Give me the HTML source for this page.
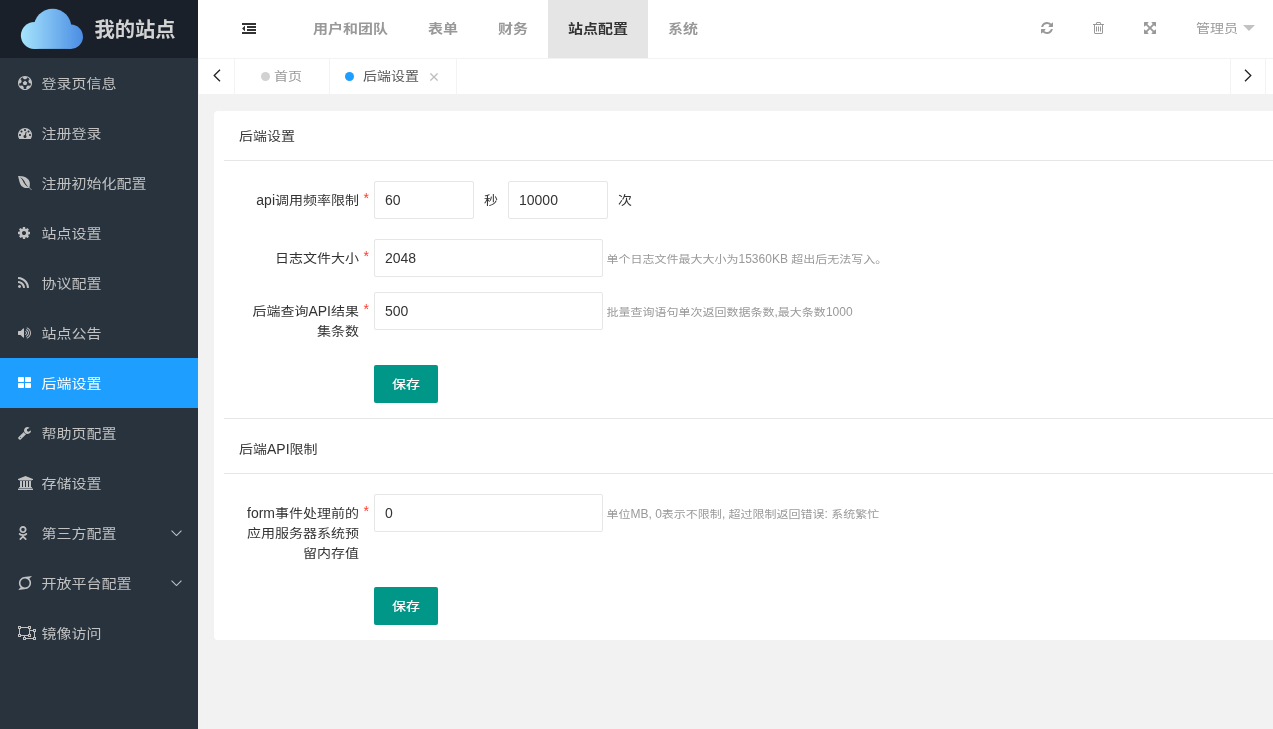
<!DOCTYPE html>
<html lang="zh-CN">
<head>
<meta charset="utf-8">
<title>后端设置</title>
<style>
*{box-sizing:border-box;margin:0;padding:0}
html,body{width:1273px;height:729px;overflow:hidden}
body{position:relative;background:#f2f2f2;font-family:"Liberation Sans","Noto Sans CJK SC",sans-serif;font-size:14px;color:#333;line-height:24px}
ul{list-style:none}
.c{display:inline-block;transform:translateY(.3px) scaleY(.87);transform-origin:50% 50%}
#logo .c{transform:none}
#menu .c{transform:translateY(.25px) scaleY(.87)}
.aux .c{transform:translateY(.4px) scaleY(.87)}
.mid .c{transform:translateY(.6px) scaleY(.87)}
.hd .c{transform:translateY(.2px) scaleY(.87)}
#tabs .c{transform:translateY(-.5px) scaleY(.87)}
#head .nav .c{transform:translateY(-.5px) scaleY(.86)}
#app{position:absolute;left:0;top:0;width:1273px;height:729px;overflow:hidden;will-change:transform}
svg.fa{display:block;position:absolute}
/* sidebar */
#side{position:absolute;left:0;top:0;width:198px;height:729px;background:#28333e;overflow:hidden}
#logo{position:absolute;left:0;top:0;width:198px;height:58px;background:#1a2029}
#logo svg{position:absolute;left:0;top:0;width:198px;height:58px}
#logo b{position:absolute;left:94.5px;top:0.5px;line-height:58px;font-size:20.3px;font-weight:bold;color:#d2d2d2;white-space:nowrap}
#menu li{position:absolute;left:0;width:198px;height:50px;line-height:50px;color:#c2c2c2;font-size:15px;white-space:nowrap}
#menu li.on{background:#1e9fff;color:#fff}
#menu li svg.fa{left:17.5px;top:18px}
#menu li>span{position:absolute;left:41.5px;top:0}
#menu li svg.chev{position:absolute;left:170.5px;top:21.5px;width:11px;height:6.5px}
/* header */
#head{position:absolute;left:198px;top:0;width:1200px;height:59px;background:#fff;border-bottom:1px solid #f3f3f3}
#head .nav{position:absolute;left:95px;top:0;height:58px;white-space:nowrap;font-size:0}
#head .nav li{display:inline-block;height:58px;line-height:58px;padding:0 20px;font-size:15px;color:#999;font-weight:bold}
#head .nav li.on{background:#e5e5e5;color:#333;font-weight:bold}
#head .r{position:absolute;top:-1px;line-height:58px;font-size:14px;color:#999;white-space:nowrap}
#caret{position:absolute;left:1045px;top:25px;width:0;height:0;border:6px solid transparent;border-top-color:#c2c2c2;border-bottom-width:0}
/* tabs */
#tabs{position:absolute;left:198px;top:59px;width:1200px;height:35px;background:#fff}
#tabs .ctl{position:absolute;top:0;height:35px;width:37px;border-left:1px solid #f3f3f3;border-right:1px solid #f3f3f3}
#tabs .ctl svg{position:absolute;left:13.9px;top:10.1px;width:8px;height:13px}
#tabs .tab{position:absolute;top:0;height:35px;line-height:36.4px;border-right:1px solid #f3f3f3;white-space:nowrap;font-size:14px}
#tabs .dot{position:absolute;top:13px;width:9px;height:9px;border-radius:50%}
/* card */
#card{position:absolute;left:214px;top:111px;width:1200px;height:529px;background:#fff;border-radius:4px}
.hd{position:absolute;left:10px;width:1190px;height:50px;line-height:50px;padding-left:15px;border-bottom:1px solid #e6e6e6;font-size:14px;color:#333}
.hr{position:absolute;left:10px;width:1190px;height:1px;background:#e6e6e6}
.lb{position:absolute;left:10px;width:150px;padding:9px 15px;line-height:20px;text-align:right;white-space:nowrap;color:#333}
.lb i{position:absolute;right:5px;top:7px;color:#ff3b30;font-style:normal;font-size:14px}
.inp{position:absolute;left:160px;height:38px;line-height:36px;border:1px solid #e6e6e6;border-radius:2px;padding-left:10px;color:#333;background:#fff}
.mid{position:absolute;line-height:20px;padding:9px 0;white-space:nowrap}
.aux{position:absolute;left:392.5px;line-height:20px;padding:10px 0 8px;font-size:12px;color:#999;white-space:nowrap}
.btn{position:absolute;left:160px;width:64px;height:38px;line-height:38px;text-align:center;background:#009688;color:#fff;border-radius:2px;font-size:14px;font-weight:500}
</style>
</head>
<body>
<div id="app">
<div id="side">
  <div id="logo">
    <svg viewBox="0 0 198 58"><defs><linearGradient id="cg" gradientUnits="userSpaceOnUse" x1="20.9" y1="0" x2="83" y2="0"><stop offset="0" stop-color="#a6e4fc"/><stop offset="1" stop-color="#4a8de4"/></linearGradient></defs>
    <g fill="url(#cg)"><circle cx="34.35" cy="35.45" r="13.45"/><circle cx="52.6" cy="27.65" r="18.85"/><circle cx="70.85" cy="36.75" r="12.15"/><rect x="34.35" y="30" width="36.5" height="18.9"/></g></svg>
    <b><span class="c">我的站点</span></b>
  </div>
  <ul id="menu">
<li class="" style="top:58px"><svg class="fa" style="width:14.00px;height:14px;" viewBox="0 -1536 1792 1792"><path fill="#c2c2c2" transform="scale(1,-1)" d="M609 720l287 208l287 -208l-109 -336h-355zM896 1536q182 0 348 -71t286 -191t191 -286t71 -348t-71 -348t-191 -286t-286 -191t-348 -71t-348 71t-286 191t-191 286t-71 348t71 348t191 286t286 191t348 71zM1515 186q149 203 149 454v3l-102 -89l-240 224l63 323
l134 -12q-150 206 -389 282l53 -124l-287 -159l-287 159l53 124q-239 -76 -389 -282l135 12l62 -323l-240 -224l-102 89v-3q0 -251 149 -454l30 132l326 -40l139 -298l-116 -69q117 -39 240 -39t240 39l-116 69l139 298l326 40z"/></svg><span><span class="c">登录页信息</span></span></li>
<li class="" style="top:108px"><svg class="fa" style="width:14.00px;height:14px;" viewBox="0 -1536 1792 1792"><path fill="#c2c2c2" transform="scale(1,-1)" d="M384 384q0 53 -37.5 90.5t-90.5 37.5t-90.5 -37.5t-37.5 -90.5t37.5 -90.5t90.5 -37.5t90.5 37.5t37.5 90.5zM576 832q0 53 -37.5 90.5t-90.5 37.5t-90.5 -37.5t-37.5 -90.5t37.5 -90.5t90.5 -37.5t90.5 37.5t37.5 90.5zM1004 351l101 382q6 26 -7.5 48.5t-38.5 29.5
t-48 -6.5t-30 -39.5l-101 -382q-60 -5 -107 -43.5t-63 -98.5q-20 -77 20 -146t117 -89t146 20t89 117q16 60 -6 117t-72 91zM1664 384q0 53 -37.5 90.5t-90.5 37.5t-90.5 -37.5t-37.5 -90.5t37.5 -90.5t90.5 -37.5t90.5 37.5t37.5 90.5zM1024 1024q0 53 -37.5 90.5
t-90.5 37.5t-90.5 -37.5t-37.5 -90.5t37.5 -90.5t90.5 -37.5t90.5 37.5t37.5 90.5zM1472 832q0 53 -37.5 90.5t-90.5 37.5t-90.5 -37.5t-37.5 -90.5t37.5 -90.5t90.5 -37.5t90.5 37.5t37.5 90.5zM1792 384q0 -261 -141 -483q-19 -29 -54 -29h-1402q-35 0 -54 29
q-141 221 -141 483q0 182 71 348t191 286t286 191t348 71t348 -71t286 -191t191 -286t71 -348z"/></svg><span><span class="c">注册登录</span></span></li>
<li class="" style="top:158px"><svg class="fa" style="width:14.00px;height:14px;" viewBox="0 -1536 1792 1792"><path fill="#c2c2c2" transform="scale(1,-1)" d="M896 720q-104 196 -160 278q-139 202 -347 318q-34 19 -70 36q-89 40 -94 32t34 -38l39 -31q62 -43 112.5 -93.5t94.5 -116.5t70.5 -113t70.5 -131q9 -17 13 -25q44 -84 84 -153t98 -154t115.5 -150t131 -123.5t148.5 -90.5q153 -66 154 -60q1 3 -49 37q-53 36 -81 57
q-77 58 -179 211t-185 310zM549 177q-76 60 -132.5 125t-98 143.5t-71 154.5t-58.5 186t-52 209t-60.5 252t-76.5 289q273 0 497.5 -36t379 -92t271 -144.5t185.5 -172.5t110 -198.5t56 -199.5t12.5 -198.5t-9.5 -173t-20 -143.5t-13 -107l323 -327h-104l-281 285
q-22 -2 -91.5 -14t-121.5 -19t-138 -6t-160.5 17t-167.5 59t-179 111z"/></svg><span><span class="c">注册初始化配置</span></span></li>
<li class="" style="top:208px"><svg class="fa" style="width:12.00px;height:14px;" viewBox="0 -1536 1536 1792"><path fill="#c2c2c2" transform="scale(1,-1)" d="M1024 640q0 106 -75 181t-181 75t-181 -75t-75 -181t75 -181t181 -75t181 75t75 181zM1536 749v-222q0 -12 -8 -23t-20 -13l-185 -28q-19 -54 -39 -91q35 -50 107 -138q10 -12 10 -25t-9 -23q-27 -37 -99 -108t-94 -71q-12 0 -26 9l-138 108q-44 -23 -91 -38
q-16 -136 -29 -186q-7 -28 -36 -28h-222q-14 0 -24.5 8.5t-11.5 21.5l-28 184q-49 16 -90 37l-141 -107q-10 -9 -25 -9q-14 0 -25 11q-126 114 -165 168q-7 10 -7 23q0 12 8 23q15 21 51 66.5t54 70.5q-27 50 -41 99l-183 27q-13 2 -21 12.5t-8 23.5v222q0 12 8 23t19 13
l186 28q14 46 39 92q-40 57 -107 138q-10 12 -10 24q0 10 9 23q26 36 98.5 107.5t94.5 71.5q13 0 26 -10l138 -107q44 23 91 38q16 136 29 186q7 28 36 28h222q14 0 24.5 -8.5t11.5 -21.5l28 -184q49 -16 90 -37l142 107q9 9 24 9q13 0 25 -10q129 -119 165 -170q7 -8 7 -22
q0 -12 -8 -23q-15 -21 -51 -66.5t-54 -70.5q26 -50 41 -98l183 -28q13 -2 21 -12.5t8 -23.5z"/></svg><span><span class="c">站点设置</span></span></li>
<li class="" style="top:258px"><svg class="fa" style="width:11.00px;height:14px;" viewBox="0 -1536 1408 1792"><path fill="#c2c2c2" transform="scale(1,-1)" d="M384 192q0 -80 -56 -136t-136 -56t-136 56t-56 136t56 136t136 56t136 -56t56 -136zM896 69q2 -28 -17 -48q-18 -21 -47 -21h-135q-25 0 -43 16.5t-20 41.5q-22 229 -184.5 391.5t-391.5 184.5q-25 2 -41.5 20t-16.5 43v135q0 29 21 47q17 17 43 17h5q160 -13 306 -80.5
t259 -181.5q114 -113 181.5 -259t80.5 -306zM1408 67q2 -27 -18 -47q-18 -20 -46 -20h-143q-26 0 -44.5 17.5t-19.5 42.5q-12 215 -101 408.5t-231.5 336t-336 231.5t-408.5 102q-25 1 -42.5 19.5t-17.5 43.5v143q0 28 20 46q18 18 44 18h3q262 -13 501.5 -120t425.5 -294
q187 -186 294 -425.5t120 -501.5z"/></svg><span><span class="c">协议配置</span></span></li>
<li class="" style="top:308px"><svg class="fa" style="width:13.00px;height:14px;" viewBox="0 -1536 1664 1792"><path fill="#c2c2c2" transform="scale(1,-1)" d="M768 1184v-1088q0 -26 -19 -45t-45 -19t-45 19l-333 333h-262q-26 0 -45 19t-19 45v384q0 26 19 45t45 19h262l333 333q19 19 45 19t45 -19t19 -45zM1152 640q0 -76 -42.5 -141.5t-112.5 -93.5q-10 -5 -25 -5q-26 0 -45 18.5t-19 45.5q0 21 12 35.5t29 25t34 23t29 36
t12 56.5t-12 56.5t-29 36t-34 23t-29 25t-12 35.5q0 27 19 45.5t45 18.5q15 0 25 -5q70 -27 112.5 -93t42.5 -142zM1408 640q0 -153 -85 -282.5t-225 -188.5q-13 -5 -25 -5q-27 0 -46 19t-19 45q0 39 39 59q56 29 76 44q74 54 115.5 135.5t41.5 173.5t-41.5 173.5
t-115.5 135.5q-20 15 -76 44q-39 20 -39 59q0 26 19 45t45 19q13 0 26 -5q140 -59 225 -188.5t85 -282.5zM1664 640q0 -230 -127 -422.5t-338 -283.5q-13 -5 -26 -5q-26 0 -45 19t-19 45q0 36 39 59q7 4 22.5 10.5t22.5 10.5q46 25 82 51q123 91 192 227t69 289t-69 289
t-192 227q-36 26 -82 51q-7 4 -22.5 10.5t-22.5 10.5q-39 23 -39 59q0 26 19 45t45 19q13 0 26 -5q211 -91 338 -283.5t127 -422.5z"/></svg><span><span class="c">站点公告</span></span></li>
<li class="on" style="top:358px"><svg class="fa" style="width:13.00px;height:14px;" viewBox="0 -1536 1664 1792"><path fill="#ffffff" transform="scale(1,-1)" d="M768 512v-384q0 -52 -38 -90t-90 -38h-512q-52 0 -90 38t-38 90v384q0 52 38 90t90 38h512q52 0 90 -38t38 -90zM768 1280v-384q0 -52 -38 -90t-90 -38h-512q-52 0 -90 38t-38 90v384q0 52 38 90t90 38h512q52 0 90 -38t38 -90zM1664 512v-384q0 -52 -38 -90t-90 -38
h-512q-52 0 -90 38t-38 90v384q0 52 38 90t90 38h512q52 0 90 -38t38 -90zM1664 1280v-384q0 -52 -38 -90t-90 -38h-512q-52 0 -90 38t-38 90v384q0 52 38 90t90 38h512q52 0 90 -38t38 -90z"/></svg><span><span class="c">后端设置</span></span></li>
<li class="" style="top:408px"><svg class="fa" style="width:13.00px;height:14px;" viewBox="0 -1536 1664 1792"><path fill="#c2c2c2" transform="scale(1,-1)" d="M384 64q0 26 -19 45t-45 19t-45 -19t-19 -45t19 -45t45 -19t45 19t19 45zM1028 484l-682 -682q-37 -37 -90 -37q-52 0 -91 37l-106 108q-38 36 -38 90q0 53 38 91l681 681q39 -98 114.5 -173.5t173.5 -114.5zM1662 919q0 -39 -23 -106q-47 -134 -164.5 -217.5
t-258.5 -83.5q-185 0 -316.5 131.5t-131.5 316.5t131.5 316.5t316.5 131.5q58 0 121.5 -16.5t107.5 -46.5q16 -11 16 -28t-16 -28l-293 -169v-224l193 -107q5 3 79 48.5t135.5 81t70.5 35.5q15 0 23.5 -10t8.5 -25z"/></svg><span><span class="c">帮助页配置</span></span></li>
<li class="" style="top:458px"><svg class="fa" style="width:16.00px;height:14px;" viewBox="0 -1536 2048 1792"><path fill="#c2c2c2" transform="scale(1,-1)" d="M960 1536l960 -384v-128h-128q0 -26 -20.5 -45t-48.5 -19h-1526q-28 0 -48.5 19t-20.5 45h-128v128zM256 896h256v-768h128v768h256v-768h128v768h256v-768h128v768h256v-768h59q28 0 48.5 -19t20.5 -45v-64h-1664v64q0 26 20.5 45t48.5 19h59v768zM1851 -64
q28 0 48.5 -19t20.5 -45v-128h-1920v128q0 26 20.5 45t48.5 19h1782z"/></svg><span><span class="c">存储设置</span></span></li>
<li class="" style="top:508px"><svg class="fa" style="width:10.00px;height:14px;" viewBox="0 -1536 1280 1792"><path fill="#c2c2c2" transform="scale(1,-1)" d="M640 629q-188 0 -321 133t-133 320q0 188 133 321t321 133t321 -133t133 -321q0 -187 -133 -320t-321 -133zM640 1306q-92 0 -157.5 -65.5t-65.5 -158.5q0 -92 65.5 -157.5t157.5 -65.5t157.5 65.5t65.5 157.5q0 93 -65.5 158.5t-157.5 65.5zM1163 574q13 -27 15 -49.5
t-4.5 -40.5t-26.5 -38.5t-42.5 -37t-61.5 -41.5q-115 -73 -315 -94l73 -72l267 -267q30 -31 30 -74t-30 -73l-12 -13q-31 -30 -74 -30t-74 30q-67 68 -267 268l-267 -268q-31 -30 -74 -30t-73 30l-12 13q-31 30 -31 73t31 74l267 267l72 72q-203 21 -317 94
q-39 25 -61.5 41.5t-42.5 37t-26.5 38.5t-4.5 40.5t15 49.5q10 20 28 35t42 22t56 -2t65 -35q5 -4 15 -11t43 -24.5t69 -30.5t92 -24t113 -11q91 0 174 25.5t120 50.5l38 25q33 26 65 35t56 2t42 -22t28 -35z"/></svg><span><span class="c">第三方配置</span></span><svg class="chev" viewBox="0 0 12 7"><path d="M0.6 0.6 L6 6 L11.4 0.6" fill="none" stroke="#c2c2c2" stroke-width="1.2"/></svg></li>
<li class="" style="top:558px"><svg class="fa" style="width:14.00px;height:14px;" viewBox="0 -1536 1792 1792"><path fill="#c2c2c2" transform="scale(1,-1)" d="M1473 607q7 118 -33 226.5t-113 189t-177 131t-221 57.5q-116 7 -225.5 -32t-192 -110.5t-135 -175t-59.5 -220.5q-7 -118 33 -226.5t113 -189t177.5 -131t221.5 -57.5q155 -9 293 59t224 195.5t94 283.5zM1792 1536l-349 -348q120 -117 180.5 -272t50.5 -321
q-11 -183 -102 -339t-241 -255.5t-332 -124.5l-999 -132l347 347q-120 116 -180.5 271.5t-50.5 321.5q11 184 102 340t241.5 255.5t332.5 124.5q167 22 500 66t500 66z"/></svg><span><span class="c">开放平台配置</span></span><svg class="chev" viewBox="0 0 12 7"><path d="M0.6 0.6 L6 6 L11.4 0.6" fill="none" stroke="#c2c2c2" stroke-width="1.2"/></svg></li>
<li class="" style="top:608px"><svg class="fa" style="width:18.00px;height:14px;" viewBox="0 -1536 2304 1792"><path fill="#c2c2c2" transform="scale(1,-1)" d="M2304 768h-128v-640h128v-384h-384v128h-896v-128h-384v384h128v128h-384v-128h-384v384h128v640h-128v384h384v-128h896v128h384v-384h-128v-128h384v128h384v-384zM2048 1024v-128h128v128h-128zM1408 1408v-128h128v128h-128zM128 1408v-128h128v128h-128zM256 256
v128h-128v-128h128zM1536 384h-128v-128h128v128zM384 384h896v128h128v640h-128v128h-896v-128h-128v-640h128v-128zM896 -128v128h-128v-128h128zM2176 -128v128h-128v-128h128zM2048 128v640h-128v128h-384v-384h128v-384h-384v128h-384v-128h128v-128h896v128h128z"/></svg><span><span class="c">镜像访问</span></span></li>

  </ul>
</div>
<div id="head">
  <div style="position:absolute;left:44px;top:22px;width:14px;height:14px"><svg class="fa" style="width:14.00px;height:14px;" viewBox="0 -1536 1792 1792"><path fill="#333" transform="scale(1,-1)" d="M384 992v-576q0 -13 -9.5 -22.5t-22.5 -9.5q-14 0 -23 9l-288 288q-9 9 -9 23t9 23l288 288q9 9 23 9q13 0 22.5 -9.5t9.5 -22.5zM1792 224v-192q0 -13 -9.5 -22.5t-22.5 -9.5h-1728q-13 0 -22.5 9.5t-9.5 22.5v192q0 13 9.5 22.5t22.5 9.5h1728q13 0 22.5 -9.5
t9.5 -22.5zM1792 608v-192q0 -13 -9.5 -22.5t-22.5 -9.5h-1088q-13 0 -22.5 9.5t-9.5 22.5v192q0 13 9.5 22.5t22.5 9.5h1088q13 0 22.5 -9.5t9.5 -22.5zM1792 992v-192q0 -13 -9.5 -22.5t-22.5 -9.5h-1088q-13 0 -22.5 9.5t-9.5 22.5v192q0 13 9.5 22.5t22.5 9.5h1088
q13 0 22.5 -9.5t9.5 -22.5zM1792 1376v-192q0 -13 -9.5 -22.5t-22.5 -9.5h-1728q-13 0 -22.5 9.5t-9.5 22.5v192q0 13 9.5 22.5t22.5 9.5h1728q13 0 22.5 -9.5t9.5 -22.5z"/></svg></div>
  <ul class="nav"><li><span class="c">用户和团队</span></li><li><span class="c">表单</span></li><li><span class="c">财务</span></li><li class="on"><span class="c">站点配置</span></li><li><span class="c">系统</span></li></ul>
  <div style="position:absolute;left:843px;top:21px;width:14px;height:14px"><svg class="fa" style="width:12.00px;height:14px;" viewBox="0 -1536 1536 1792"><path fill="#999" transform="scale(1,-1)" d="M1511 480q0 -5 -1 -7q-64 -268 -268 -434.5t-478 -166.5q-146 0 -282.5 55t-243.5 157l-129 -129q-19 -19 -45 -19t-45 19t-19 45v448q0 26 19 45t45 19h448q26 0 45 -19t19 -45t-19 -45l-137 -137q71 -66 161 -102t187 -36q134 0 250 65t186 179q11 17 53 117
q8 23 30 23h192q13 0 22.5 -9.5t9.5 -22.5zM1536 1280v-448q0 -26 -19 -45t-45 -19h-448q-26 0 -45 19t-19 45t19 45l138 138q-148 137 -349 137q-134 0 -250 -65t-186 -179q-11 -17 -53 -117q-8 -23 -30 -23h-199q-13 0 -22.5 9.5t-9.5 22.5v7q65 268 270 434.5t480 166.5
q146 0 284 -55.5t245 -156.5l130 129q19 19 45 19t45 -19t19 -45z"/></svg></div>
  <div style="position:absolute;left:895px;top:21px;width:14px;height:14px"><svg class="fa" style="width:11.00px;height:14px;" viewBox="0 -1536 1408 1792"><path fill="#999" transform="scale(1,-1)" d="M512 800v-576q0 -14 -9 -23t-23 -9h-64q-14 0 -23 9t-9 23v576q0 14 9 23t23 9h64q14 0 23 -9t9 -23zM768 800v-576q0 -14 -9 -23t-23 -9h-64q-14 0 -23 9t-9 23v576q0 14 9 23t23 9h64q14 0 23 -9t9 -23zM1024 800v-576q0 -14 -9 -23t-23 -9h-64q-14 0 -23 9t-9 23v576
q0 14 9 23t23 9h64q14 0 23 -9t9 -23zM1152 76v948h-896v-948q0 -22 7 -40.5t14.5 -27t10.5 -8.5h832q3 0 10.5 8.5t14.5 27t7 40.5zM480 1152h448l-48 117q-7 9 -17 11h-317q-10 -2 -17 -11zM1408 1120v-64q0 -14 -9 -23t-23 -9h-96v-948q0 -83 -47 -143.5t-113 -60.5h-832
q-66 0 -113 58.5t-47 141.5v952h-96q-14 0 -23 9t-9 23v64q0 14 9 23t23 9h309l70 167q15 37 54 63t79 26h320q40 0 79 -26t54 -63l70 -167h309q14 0 23 -9t9 -23z"/></svg></div>
  <div style="position:absolute;left:946px;top:21px;width:14px;height:14px"><svg class="fa" style="width:12.00px;height:14px;" viewBox="0 -1536 1536 1792"><path fill="#999" transform="scale(1,-1)" d="M1283 995l-355 -355l355 -355l144 144q29 31 70 14q39 -17 39 -59v-448q0 -26 -19 -45t-45 -19h-448q-42 0 -59 40q-17 39 14 69l144 144l-355 355l-355 -355l144 -144q31 -30 14 -69q-17 -40 -59 -40h-448q-26 0 -45 19t-19 45v448q0 42 40 59q39 17 69 -14l144 -144
l355 355l-355 355l-144 -144q-19 -19 -45 -19q-12 0 -24 5q-40 17 -40 59v448q0 26 19 45t45 19h448q42 0 59 -40q17 -39 -14 -69l-144 -144l355 -355l355 355l-144 144q-31 30 -14 69q17 40 59 40h448q26 0 45 -19t19 -45v-448q0 -42 -39 -59q-13 -5 -25 -5q-26 0 -45 19z
"/></svg></div>
  <div class="r" style="left:998px"><span class="c">管理员</span></div>
  <div id="caret"></div>
</div>
<div id="tabs">
  <div class="ctl" style="left:0"><svg viewBox="0 0 8 13"><path d="M7 0.7 L1.2 6.5 L7 12.3" fill="none" stroke="#222" stroke-width="1.3"/></svg></div>
  <div class="tab" style="left:37px;width:95px;color:#999"><span class="dot" style="left:26px;background:#d2d2d2"></span><span style="position:absolute;left:39px"><span class="c">首页</span></span></div>
  <div class="tab" style="left:132px;width:127px;color:#555"><span class="dot" style="left:15px;background:#1e9fff"></span><span style="position:absolute;left:33px"><span class="c">后端设置</span></span>
    <svg style="position:absolute;left:100.1px;top:14.2px;width:8px;height:8px" viewBox="0 0 8 8"><path d="M0.4 0.4 L7.6 7.6 M7.6 0.4 L0.4 7.6" stroke="#bdbdbd" stroke-width="1.25" fill="none"/></svg></div>
  <div class="ctl" style="left:1032px;width:36px"><svg viewBox="0 0 8 13" style="left:13.3px"><path d="M1 0.7 L6.8 6.5 L1 12.3" fill="none" stroke="#222" stroke-width="1.3"/></svg></div>
</div>
<div id="card">
  <div class="hd" style="top:0"><span class="c">后端设置</span></div>
  <div class="lb" style="top:70px">api<span class="c">调用频率限制</span><i>*</i></div>
  <div class="inp" style="top:70px;width:100px">60</div>
  <div class="mid" style="left:270px;top:70px"><span class="c">秒</span></div>
  <div class="inp" style="top:70px;left:294px;width:100px">10000</div>
  <div class="mid" style="left:404px;top:70px"><span class="c">次</span></div>

  <div class="lb" style="top:128px"><span class="c">日志文件大小</span><i>*</i></div>
  <div class="inp" style="top:128px;width:229px">2048</div>
  <div class="aux" style="top:128px"><span class="c">单个日志文件最大大小为</span>15360KB <span class="c">超出后无法写入。</span></div>

  <div class="lb" style="top:181px"><span class="c">后端查询</span>API<span class="c">结果</span><i>*</i><br><span class="c">集条数</span></div>
  <div class="inp" style="top:181px;width:229px">500</div>
  <div class="aux" style="top:181px"><span class="c">批量查询语句单次返回数据条数</span>,<span class="c">最大条数</span>1000</div>

  <div class="btn" style="top:254px"><span class="c">保存</span></div>

  <div class="hr" style="top:307px"></div>
  <div class="hd" style="top:313px"><span class="c">后端</span>API<span class="c">限制</span></div>

  <div class="lb" style="top:383px">form<span class="c">事件处理前的</span><i>*</i><br><span class="c">应用服务器系统预</span><br><span class="c">留内存值</span></div>
  <div class="inp" style="top:383px;width:229px">0</div>
  <div class="aux" style="top:383px"><span class="c">单位</span>MB, 0<span class="c">表示不限制</span>, <span class="c">超过限制返回错误</span>: <span class="c">系统繁忙</span></div>

  <div class="btn" style="top:476px"><span class="c">保存</span></div>
</div>
</div>
</body>
</html>
